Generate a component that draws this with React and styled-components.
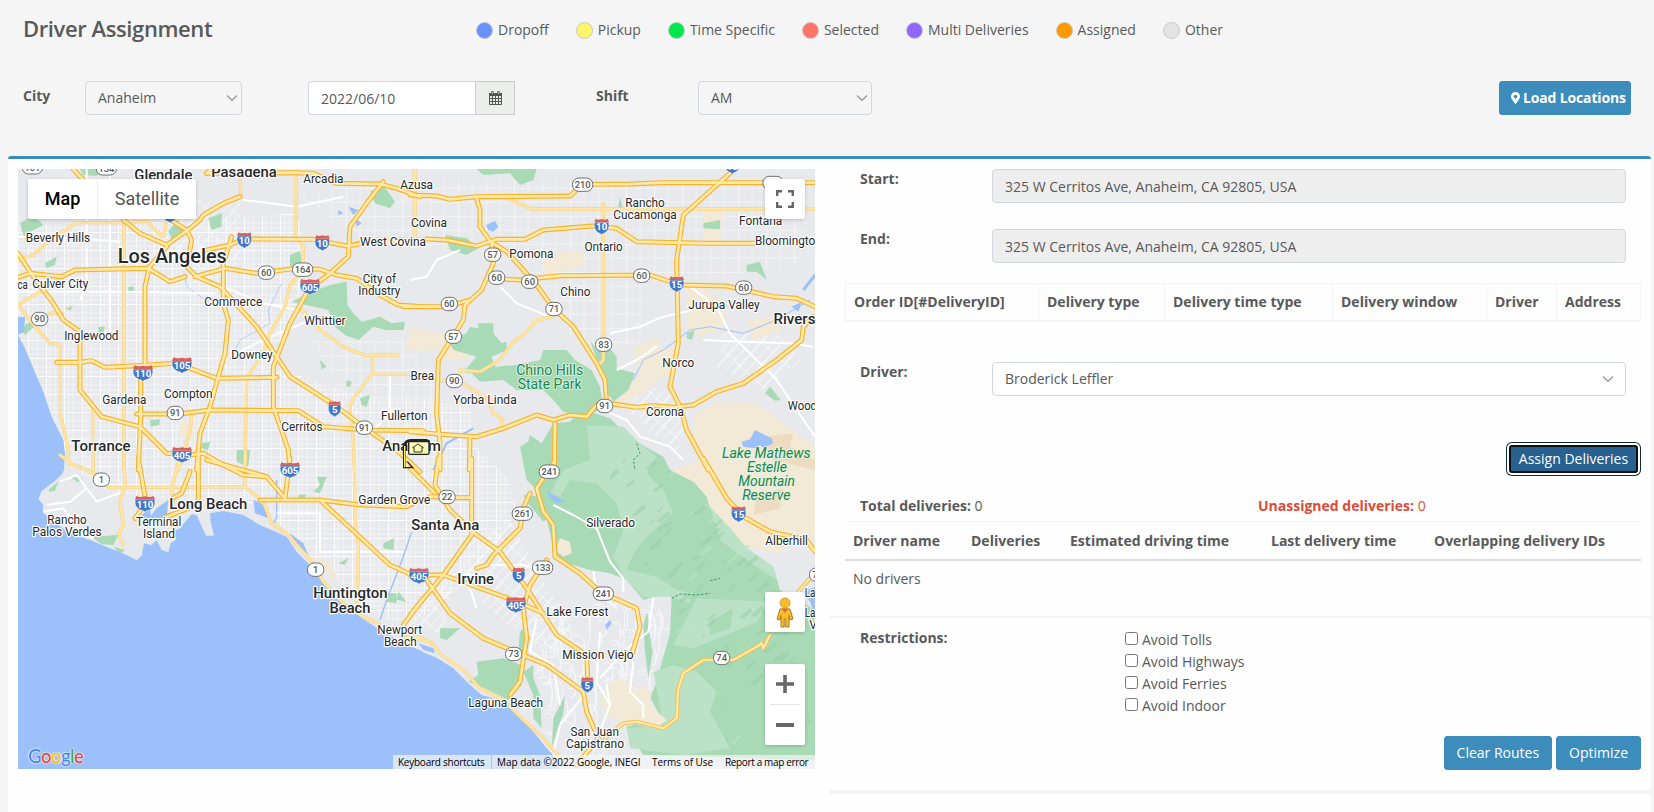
import React from "react";
import styled, { createGlobalStyle, css } from "styled-components";
import { FaMapMarkerAlt } from "react-icons/fa";

const GlobalStyle = createGlobalStyle`
  *, *::before, *::after { box-sizing: border-box; }
  body {
    margin: 0;
    background: #f5f5f5;
    color: #58595b;
    font: 14px/20px "Open Sans", "Noto Sans", sans-serif;
    overflow: hidden;
  }
`;

/* ---------- page parts ---------- */

const Page = styled.div`
  height: 812px;
  display: flex;
  flex-direction: column;
`;

const TopBar = styled.header`
  height: 81px;
  display: flex;
  align-items: flex-start;
  padding: 12px 23px 0;
`;

const Title = styled.h1`
  margin: 0;
  width: 452px;
  font-size: 22px;
  line-height: 32px;
  font-weight: 600;
  letter-spacing: -0.4px;
`;

const Legend = styled.ul`
  display: flex;
  gap: 27px;
  margin: 0;
  padding: 8px 0 0 1px;
  list-style: none;
`;

const LegendItem = styled.li`
  display: flex;
  align-items: center;
  gap: 5px;
`;

const Dot = styled.span`
  width: 17px;
  height: 17px;
  border: 1px solid #c8c8c8;
  border-radius: 50%;
  background: ${(p) => p.$color};
`;

const Filters = styled.div`
  height: 75px;
  display: flex;
  align-items: flex-start;
  padding: 0 23px;
`;

const FilterLabel = styled.label`
  width: ${(p) => p.$width}px;
  padding-top: 5px;
  font-weight: 700;
`;

const fieldFrame = css`
  height: 34px;
  border: 1px solid #d2d6de;
  border-radius: 4px;
  display: flex;
  align-items: center;
`;

const Select = styled.div`
  ${fieldFrame}
  justify-content: space-between;
  width: ${(p) => p.$width};
  margin-right: ${(p) => p.$after || 0}px;
  padding: 0 ${(p) => p.$arrowInset || 3}px 0 12px;
  background: ${(p) => p.$bg || "transparent"};
`;

const DateGroup = styled.div`
  display: flex;
  width: 207px;
  margin-right: 81px;
`;

const DateField = styled.div`
  ${fieldFrame}
  flex: 1;
  padding: 1px 0 0 12px;
  border-right: 0;
  border-radius: 4px 0 0 4px;
  background: #fff;
`;

const DateAddon = styled.div`
  width: 40px;
  height: 34px;
  display: flex;
  align-items: center;
  justify-content: center;
  border: 1px solid #ccc;
  background: #eceeec;
`;

const Button = styled.button`
  height: 34px;
  padding: 0 12px;
  border: 1px solid #3c8dbc;
  border-radius: 3px;
  background: #3c8dbc;
  color: #fff;
  font: inherit;
  white-space: nowrap;
  ${(p) =>
    p.$load &&
    css`
      display: flex;
      align-items: center;
      gap: 3px;
      width: 132px;
      margin-left: auto;
      padding: 0 0 0 11px;
      font-weight: 700;
      letter-spacing: -0.15px;

      svg {
        flex: none;
        width: 9px;
      }
    `}
  ${(p) =>
    p.$focused &&
    css`
      width: 129px;
      height: 28px;
      margin: 3px;
      padding: 0;
      border: 2px solid #101010;
      border-radius: 3px;
      background: #286090;
      box-shadow: 0 0 0 2px #fff, 0 0 0 3px #122b40;
    `}
`;

const Panel = styled.main`
  flex: 1;
  display: flex;
  margin: 0 3px 0 8px;
  border-top: 3px solid #3c8dbc;
  border-radius: 3px 3px 0 0;
  background: #fefefe;
`;

const MapColumn = styled.section`
  width: 822px;
  padding: 10px 0 0 10px;
`;

const Side = styled.section`
  flex: 1;
  padding-top: 10px;
`;

const FieldRow = styled.div`
  display: flex;
  align-items: flex-start;
  height: ${(p) => p.$height}px;
  padding: 0 25px 0 30px;
`;

const RowLabel = styled.label`
  width: 132px;
  font-weight: 700;
`;

const Input = styled.div`
  ${fieldFrame}
  flex: 1;
  padding: 2px 12px 0;
  background: #eee;
`;

const OrderTable = styled.div`
  display: grid;
  grid-template-columns: 193px 126px 168px 154px 70px 85px;
  width: 796px;
  height: 39px;
  margin: 0 0 40px 15px;
  border: 1px solid #f4f4f4;
  border-left: 0;
  border-bottom-width: 2px;
`;

const OrderHead = styled.div`
  padding: 8px;
  border-left: 1px solid #f4f4f4;
  font-weight: 700;
  white-space: nowrap;
`;

const Actions = styled.div`
  display: flex;
  justify-content: flex-end;
  gap: 4px;
  padding-right: 10px;
`;

const Totals = styled.div`
  display: grid;
  grid-template-columns: 398px 1fr;
  height: 45px;
  padding: 20px 0 0 30px;
`;

const Total = styled.div`
  color: ${(p) => (p.$alert ? "#dd4b39" : "inherit")};
`;

const DriverTable = styled.div`
  width: 796px;
  height: 95px;
  margin-left: 15px;
  border-top: 1px solid #f4f4f4;
`;

const DriverHeads = styled.div`
  display: grid;
  grid-template-columns: 118px 99px 201px 163px 1fr;
  height: 39px;
  padding: 9px 8px 0;
  border-bottom: 2px solid #ddd;
  font-weight: 700;
`;

const Empty = styled.div`
  padding: 8px;
`;

const Restrictions = styled.div`
  display: flex;
  height: 120px;
  padding: 10px 0 0 30px;
  border-top: 2px solid #f4f4f4;
`;

const RestrictionLabel = styled.div`
  width: 265px;
  font-weight: 700;
`;

const Choices = styled.div`
  display: flex;
  flex-direction: column;
  padding-top: 1px;
`;

const Choice = styled.label`
  display: flex;
  align-items: flex-start;
  height: 22px;
  line-height: 22px;

  input {
    width: 13px;
    height: 13px;
    margin: 3px 4px 0 0;
  }
`;

const Rule = styled.div`
  height: 4px;
  margin-top: 20px;
  background: #f4f4f4;
`;

/* ---------- map parts ---------- */

const MapFrame = styled.div`
  position: relative;
  width: 797px;
  height: 600px;
  overflow: hidden;
  font-family: Roboto, sans-serif;
`;

const MapCanvas = styled.svg`
  display: block;
  width: 797px;
  height: 600px;
`;

const MapControl = styled.div`
  position: absolute;
  top: ${(p) => p.$top}px;
  ${(p) => (p.$left ? `left: ${p.$left}px;` : "right: 10px;")}
  display: flex;
  flex-direction: ${(p) => (p.$stack ? "column" : "row")};
  align-items: center;
  justify-content: center;
  width: ${(p) => p.$width || 40}px;
  height: ${(p) => p.$height || 40}px;
  border-radius: 2px;
  background: #fff;
  box-shadow: 0 1px 4px -1px rgba(0, 0, 0, 0.3);
`;

const MapType = styled.div`
  flex: ${(p) => (p.$active ? "0 0 69px" : "1")};
  color: ${(p) => (p.$active ? "#000" : "#565656")};
  font-size: 18px;
  line-height: 40px;
  font-weight: ${(p) => (p.$active ? 500 : 400)};
  text-align: center;
  border-left: ${(p) => (p.$active ? "0" : "1px solid #eee")};
`;

const ZoomLine = styled.div`
  width: 30px;
  height: 1px;
  margin: 11px 0;
  background: #e6e6e6;
`;

const Footer = styled.div`
  position: absolute;
  right: 0;
  bottom: 0;
  display: flex;
  height: 14px;
  background: rgba(245, 245, 245, 0.7);
  color: #000;
  font: 10px/15px "Open Sans", sans-serif;
  white-space: nowrap;
`;

const FooterText = styled.span`
  width: ${(p) => p.$width}px;
  padding-left: 5px;
  letter-spacing: ${(p) => p.$tracking || -0.03}px;
  border-right: ${(p) => (p.$divider ? "1px solid #a9c4ea" : "0")};
`;

const Logo = styled.div`
  position: absolute;
  left: 10px;
  bottom: 1px;
  font: 500 18.5px/24px Lato, sans-serif;
  letter-spacing: -0.5px;
  text-shadow: 0 0 1px #fff, 0 0 1px #fff, 0 0 2px #fff;
`;

const Letter = styled.span`
  color: ${(p) => p.$color};
`;

/* ---------- map data: three map units to one screen pixel ---------- */

const ORIGIN = { nw: [0, 0], ne: [1200, 0], sw: [0, 915], se: [1200, 915] };

const shift = (area, text) => {
  const [dx, dy] = ORIGIN[area];
  return text
    .split(" ")
    .map((pair) => {
      const [x, y] = pair.split(",").map(Number);
      return `${x + dx},${y + dy}`;
    })
    .join(" ");
};

const OCEAN = [
  shift("nw", "24,525 45,565 70,625 100,695 125,770 160,840 165,880 162,930"),
  shift("sw", "156,28 130,52 95,78 85,102 100,120 98,142 130,170 180,205 240,225 300,250 350,270 380,286 395,272 402,235 425,240 440,225 455,255 475,262 482,235 500,222 480,205 510,190 530,165 545,148 560,150 588,212 612,212 602,170 600,145 640,138 700,150 750,180 800,202 830,215 860,260 900,300 940,350 1000,415 1050,455 1110,495 1180,535 1230,556"),
  shift("se", "40,562 80,578 130,610 175,655 215,690 290,712 320,745 370,800 410,850 440,880 450,930"),
  "24,1830",
].join(" ");

const AREAS = [
  ["sand", "nw", "508,785 555,785 550,845 508,825"],
  ["sand", "nw", "1185,540 1240,525 1240,575 1190,568"],
  ["sand", "ne", "0,500 130,530 185,600 100,600 80,570 0,560"],
  ["sand", "ne", "670,560 750,530 750,570 800,560 790,640 740,660 700,700 620,740 650,690 690,640"],
  ["sand", "ne", "830,380 880,380 950,440 940,500 870,530 830,500"],
  ["sand", "ne", "400,275 520,275 520,320 400,345"],
  ["sand", "ne", "880,150 940,150 930,245 880,245"],
  ["sand", "ne", "1010,480 1090,470 1120,510 1030,540"],
  ["sand", "ne", "850,765 920,725 1040,730 1200,850 1215,860 1215,1130 1180,1130 1100,1180 1010,1160 930,1110 890,1040 780,930 880,900 850,850"],
  ["sand2", "ne", "1060,830 1150,820 1140,860 1215,900 1215,930 1090,900"],
  ["sand2", "se", "1040,90 1120,70 1110,130 1030,150"],
  ["green", "nw", "30,190 70,165 100,195 60,215 45,240"],
  ["green", "nw", "475,215 500,180 525,210 490,245"],
  ["green", "nw", "210,27 290,27 260,48 220,45"],
  ["green", "nw", "1080,95 1120,75 1155,125 1140,145 1095,130"],
  ["green", "nw", "105,310 140,290 135,315 110,325"],
  ["green", "nw", "595,175 635,160 635,200 605,210"],
  ["green", "nw", "840,285 870,272 878,325 840,318"],
  ["green", "nw", "845,425 895,400 960,375 1010,365 1012,435 1030,460 1055,485 1110,470 1145,490 1185,485 1180,510 1130,510 1090,500 1045,540 1005,525 975,500 955,450"],
  ["green", "nw", "1010,660 1025,665 1020,680 1008,680"],
  ["green", "nw", "1050,715 1080,705 1070,740 1055,735"],
  ["green", "nw", "930,600 950,620 935,628"],
  ["green", "nw", "355,380 372,380 372,395 355,395"],
  ["green", "nw", "165,445 190,438 180,452"],
  ["green", "nw", "265,500 285,500 280,520 265,515"],
  ["green", "nw", "420,780 450,778 448,795 422,800"],
  ["green", "nw", "30,505 60,485 72,500 45,525"],
  ["green", "nw", "575,850 600,845 595,870 575,865"],
  ["green", "nw", "680,870 720,870 715,920 680,905"],
  ["green", "ne", "200,27 380,27 370,60 330,75 300,40 220,45"],
  ["green", "ne", "105,225 170,235 205,265 170,285 120,270"],
  ["green", "ne", "880,190 930,180 930,208 880,205"],
  ["green", "ne", "1010,315 1050,305 1070,360 1040,335 1010,335"],
  ["green", "ne", "630,110 640,150 625,140"],
  ["green", "ne", "830,520 855,510 845,540 830,535"],
  ["green", "ne", "1065,700 1080,680 1112,720 1095,722"],
  ["green", "ne", "115,540 170,520 180,500 205,505 205,490 250,490 250,520 275,550 290,545 290,570 245,590 255,620 320,615 390,600 400,570 470,570 495,600 545,630 570,680 580,740 530,770 460,755 430,720 400,690 320,690 280,660 210,665 185,640 160,635 200,590 130,570"],
  ["green", "ne", "540,540 560,570 600,565 620,590 620,625 675,640 655,690 610,725 585,690 570,630"],
  ["green", "ne", "330,860 355,845 360,825 395,850 430,790 480,785 520,740 555,760 600,775 640,815 670,840 760,890 780,930 850,965 890,1010 900,1045 960,1105 1010,1165 1090,1220 1110,1290 1215,1350 1215,1800 700,1785 650,1710 650,1700 750,1670 740,1650 720,1610 735,1580 780,1420 785,1310 760,1300 700,1320 650,1260 600,1240 540,1230 440,1200 410,1080 390,1000 350,960"],
  ["pale", "ne", "530,795 640,800 690,850 740,890 710,940 760,990 790,1060 720,1120 670,1180 650,1230 740,1250 800,1290 850,1300 840,1330 780,1310 700,1310 640,1250 610,1190 640,1110 620,1030 560,970 480,960 450,1010 420,1000 460,930 540,900"],
  ["pale", "ne", "900,1040 960,1105 1010,1165 1090,1220 1100,1260 1010,1200 930,1140"],
  ["pale", "se", "730,620 790,600 860,620 920,680 900,740 960,850 820,870 660,850 650,790 760,780"],
  ["pale", "se", "860,400 1080,410 1040,470 950,510 850,550 790,540"],
  ["green", "se", "900,470 970,430 960,490 900,510"],
  ["sand", "se", "450,220 480,230 485,265 460,275 435,255"],
  ["sand", "se", "600,650 630,640 680,680 700,660 725,680 720,720 770,765 740,790 640,770 600,760 570,710"],
  ["green", "se", "200,590 280,580 335,600 335,660 295,705 225,670 175,650 205,630"],
  ["green", "se", "330,500 350,480 360,520 340,595 325,560"],
  ["green", "se", "90,490 150,490 110,525 90,520"],
  ["green", "se", "340,620 370,600 370,640 390,690 395,790 370,760 370,690"],
  ["green", "se", "430,760 465,690 460,745 440,800 425,850"],
  ["green", "se", "700,480 712,440 718,500 728,560 715,640 705,560"],
  ["green", "se", "340,90 400,95 430,150 400,170 350,110"],
  ["green", "sw", "120,70 145,50 135,78 115,80"],
  ["green", "sw", "180,35 215,40 205,52"],
  ["green", "sw", "245,215 325,210 310,240 275,238"],
  ["green", "sw", "310,245 345,255 330,268"],
  ["green", "sw", "920,35 950,35 930,85 910,80 930,60"],
  ["green", "sw", "1120,235 1152,220 1150,255 1120,250"],
  ["green", "sw", "985,295 1015,280 1005,300"],
  ["green", "sw", "1135,385 1160,385 1160,415 1130,410"],
  ["green", "sw", "1165,380 1190,410 1160,405"],
  ["green", "sw", "865,90 890,88 882,102 865,100"],
  ["sand", "sw", "900,275 950,285 975,320 975,345 945,320"],
  ["lake", "ne", "995,845 1020,838 1035,810 1085,835 1090,850 1060,865 1050,855 1035,865 1000,860"],
  ["lake", "ne", "228,195 255,183 265,200 250,215 235,210"],
  ["lake", "ne", "1145,440 1175,425 1165,455"],
  ["lake", "nw", "24,470 45,472 42,515 24,525"],
  ["lake", "nw", "1015,140 1045,150 1030,165"],
  ["lake", "nw", "985,150 1000,160 985,165"],
  ["lake", "nw", "1035,175 1055,190 1040,200"],
  ["lake", "se", "410,75 430,90 465,110 440,115 420,100"],
  ["lake", "se", "585,480 600,465 605,475 590,495"],
  ["lake", "se", "1180,380 1215,365 1215,450 1200,410"],
  ["lake", "sw", "440,130 475,105 470,160 430,180 420,155"],
  ["lake", "sw", "730,105 765,120 775,160 735,145"],
  ["lake", "sw", "840,205 880,235 895,270 855,240"],
  ["lake", "sw", "395,150 420,130 425,170 405,170"],
  ["lake", "se", "25,535 70,550 75,565 40,555"],
];

const AREA_COLORS = {
  green: "#a8dab5",
  pale: "#bbe2c6",
  sand: "#f2e9d6",
  sand2: "#eedcc2",
  lake: "#9cc0f9",
};

const ROADS = [
  /* county roads */
  ["minor", "nw", "342,180 342,930"],
  ["minor", "nw", "24,300 70,285 120,240 200,188 345,188 405,185"],
  ["minor", "nw", "24,435 90,395 150,350"],
  ["minor", "nw", "30,440 75,500 120,550 151,555 151,760 175,870 175,910 220,925 260,945"],
  ["minor", "nw", "95,470 130,458 158,460"],
  ["minor", "nw", "248,740 248,930"],
  ["minor", "nw", "470,180 460,230 430,205 410,180"],
  ["minor", "nw", "858,27 858,230 880,260 880,310"],
  ["minor", "nw", "870,345 840,375 825,440 780,520 760,580 710,655 705,930"],
  ["minor", "nw", "545,765 540,810 505,930"],
  ["minor", "nw", "870,445 930,510 1000,560 1060,585 1165,585"],
  ["minor", "nw", "1088,585 1088,640 1030,715 1020,740 1030,840 1033,930"],
  ["minor", "nw", "1088,643 1230,643"],
  ["minor", "nw", "1018,258 1060,240 1140,237 1240,237"],
  ["minor", "nw", "1213,27 1213,240"],
  ["minor", "nw", "690,27 692,110"],
  ["minor", "ne", "15,27 15,235"],
  ["minor", "ne", "290,115 365,147 1214,147"],
  ["minor", "ne", "580,130 580,600 570,610"],
  ["minor", "ne", "430,470 380,480 345,520 310,545 270,600 210,635 150,630 145,655"],
  ["minor", "ne", "75,660 150,665 230,715 250,760 275,775 275,805"],
  ["minor", "sw", "150,-30 190,0"],
  ["minor", "sw", "248,-30 250,25"],
  ["minor", "sw", "342,-30 345,60 330,110 340,180 325,205 340,240"],
  ["minor", "sw", "280,55 300,68 705,65 760,110 785,175 830,205 900,285 940,350 1000,415 1060,455 1130,490 1180,505 1240,520"],
  ["minor", "sw", "510,-30 485,70 490,110"],
  ["minor", "sw", "705,-30 705,65"],
  ["minor", "sw", "1033,-30 1035,180 1045,240 1042,440"],
  ["minor", "se", "-20,515 60,530 95,570 160,615 210,670 280,705 330,755 390,810 440,865 470,900"],
  /* freeways */
  ["major", "nw", "24,352 60,340 155,350 195,330 415,325 480,365 525,350"],
  ["major", "nw", "24,280 70,350 130,430 160,480 210,515 210,690 275,770 390,800 470,880 540,885 580,880 640,915 700,945 770,950"],
  ["major", "nw", "340,180 390,220 470,255 540,205 570,180 580,165 640,130 690,110"],
  ["major", "nw", "415,325 470,260"],
  ["major", "nw", "418,320 405,380 405,610"],
  ["major", "nw", "392,655 392,770 385,930"],
  ["major", "nw", "140,607 210,607 245,602 285,622 380,617 500,610 620,655 800,652"],
  ["major", "nw", "665,230 640,310 640,430 655,480 645,580 625,650 600,740 570,820 560,930"],
  ["major", "nw", "475,175 530,210 545,240 530,320 560,350 630,380 740,500 840,650 980,740 1080,815 1160,870 1230,935"],
  ["major", "nw", "590,270 660,255 700,237 910,238 1010,258 1060,250"],
  ["major", "nw", "555,350 645,325 740,340 860,325 930,328 980,345 1040,355 1100,400 1165,435 1240,440"],
  ["major", "nw", "380,762 510,762 600,750 865,752 940,800 1070,810 1240,812"],
  ["major", "nw", "1120,65 1070,130 1020,200 1015,290 960,340 895,390 840,490 790,620 790,740 835,870 840,930"],
  ["major", "nw", "190,27 220,60"],
  ["major", "nw", "590,40 850,38 910,40 980,70 1110,72 1160,85 1230,110"],
  ["major", "nw", "600,30 590,40"],
  ["major", "ne", "0,105 80,108 120,118 200,110 480,108 510,80 530,73 660,72 760,68 1214,68"],
  ["major", "ne", "200,115 210,150 210,200 245,250 250,310 215,390 165,435 160,480 85,600 80,760 90,850 90,930"],
  ["major", "ne", "50,237 110,240 200,258 260,238 345,238 400,210 550,198 620,205 680,245 890,250 1035,250"],
  ["major", "ne", "240,355 330,360 450,347 720,345 810,375 950,378 1090,410 1160,415 1215,440"],
  ["major", "ne", "-20,440 110,440 180,420"],
  ["major", "ne", "250,250 290,275 340,330 380,375 430,445 490,500 560,610 585,660 590,735"],
  ["major", "ne", "960,40 820,165 800,300 805,550 780,680 810,740 830,810 895,930"],
  ["major", "ne", "1210,470 1180,500 1175,540 1100,600 1000,670 920,695 850,735 790,742 730,737 680,742 610,732 560,735 530,770 480,765 430,780 380,765 280,805 200,830 120,825 0,815"],
  ["major", "ne", "180,830 178,930"],
  ["major", "ne", "435,790 433,930"],
  ["major", "sw", "385,-20 405,95"],
  ["major", "sw", "590,-15 770,35 825,100 840,-20"],
  ["major", "sw", "750,105 930,105 1050,120"],
  ["major", "sw", "930,105 1140,300 1240,345"],
  ["major", "sw", "490,98 515,85 540,20"],
  ["major", "sw", "375,160 400,125"],
  ["major", "sw", "470,155 535,130"],
  ["major", "sw", "565,-30 565,105"],
  ["major", "sw", "1060,120 1190,125 1220,110"],
  ["major", "sw", "1240,400 1180,480"],
  ["major", "se", "85,-20 75,60 120,135 200,210 270,260 350,370 440,510 530,570 533,635"],
  ["major", "se", "0,10 75,85"],
  ["major", "se", "185,-20 185,210 100,330 0,450"],
  ["major", "se", "0,330 100,330 310,405 400,445"],
  ["major", "se", "50,345 120,445 220,520 410,600 520,680 530,740 565,820 500,900"],
  ["major", "se", "433,-10 380,70 400,140 430,180 435,275 510,325 570,380 680,430 690,485 665,570"],
  ["major", "se", "360,85 340,130 330,190 250,270 230,300 200,310"],
  ["major", "se", "410,285 360,360 340,430 350,520 330,650 300,690"],
  ["major", "se", "60,95 140,98 185,98"],
  ["major", "se", "880,-20 950,100 1000,155 1080,200 1190,225 1215,260"],
  ["minor2", "se", "585,820 640,775 680,770 760,790 800,760 805,670 820,625 880,585 970,585 1040,545 1055,535 1060,550 1080,510"],
  ["minor2", "se", "1165,380 1200,340"],
];

const STREETS = [
  ["nw", "24,230 200,235 330,245"],
  ["nw", "24,395 340,395 620,400"],
  ["nw", "230,27 230,360 212,420"],
  ["nw", "300,27 300,540"],
  ["nw", "700,120 860,140 1000,110"],
  ["nw", "640,380 760,430 860,450"],
  ["nw", "660,590 760,540 900,480"],
  ["nw", "1140,640 1140,760 1090,810"],
  ["ne", "0,360 50,350 80,300 150,270"],
  ["ne", "270,380 320,430 420,470"],
  ["ne", "600,520 690,500 760,470 850,450"],
  ["ne", "840,380 920,440 960,520 1000,560 1100,660 1215,830"],
  ["ne", "880,540 1000,545 1140,550 1210,560"],
  ["ne", "580,750 650,780 690,830 780,860 820,900"],
  ["ne", "620,630 680,600 740,560"],
  ["se", "430,120 490,150 560,190 600,290 640,340 640,380"],
  ["se", "240,300 340,300 410,320"],
  ["se", "380,460 360,560 430,600 450,720"],
  ["se", "570,500 560,650 600,720"],
  ["se", "430,870 450,780 530,680"],
  ["se", "670,590 660,680 700,720 700,760"],
  ["se", "590,660 600,720 570,800"],
  ["se", "730,400 715,500 640,560 570,640"],
  ["se", "100,320 180,370 200,430"],
  ["se", "550,320 560,380 620,430"],
  ["sw", "150,50 200,30 260,110 340,80"],
  ["sw", "110,120 180,110 230,70"],
  ["sw", "100,140 160,130 210,200 250,220"],
  ["sw", "800,145 930,145 930,260 1180,260"],
];

const ROAD_STYLES = {
  major: ["#f9b32b", 15, "#ffe9a8", 8],
  minor: ["#fad07a", 10, "#fee5a5", 7],
  minor2: ["#f9b93e", 12, "#ffe9a8", 7],
};

/* name, area, centre x, baseline y, width, size in units, weight */
const PLACES = [
  ["Glendale", "nw", 460, 61, 174, 42, 500],
  ["Pasadena", "nw", 702, 51, 197, 44, 500],
  ["Arcadia", "nw", 940, 69, 121],
  ["Azusa", "nw", 1220, 87, 98],
  ["Beverly Hills", "nw", 144, 246, 193],
  ["Los Angeles", "nw", 487, 308, 327, 61, 500],
  ["ca", "nw", 38, 386, 31],
  ["Culver City", "nw", 151, 384, 168],
  ["Commerce", "nw", 670, 438, 174],
  ["City of", "nw", 1108, 369, 100],
  ["Industry", "nw", 1108, 405, 126],
  ["Whittier", "nw", 945, 495, 124],
  ["Inglewood", "nw", 244, 540, 163],
  ["Downey", "nw", 726, 598, 124],
  ["Gardena", "nw", 343, 732, 132],
  ["Compton", "nw", 535, 714, 146],
  ["Cerritos", "nw", 876, 813, 124],
  ["Torrance", "nw", 273, 874, 178, 45, 500],
  ["West Covina", "nw", 1149, 258, 198],
  ["Fullerton", "nw", 1183, 780, 140],
  ["Anaheim", "nw", 1205, 873, 176, 45, 500],
  ["Covina", "ne", 57, 201, 108],
  ["Pomona", "ne", 364, 294, 132],
  ["Ontario", "ne", 581, 273, 115],
  ["Rancho", "ne", 705, 141, 118],
  ["Cucamonga", "ne", 705, 177, 190],
  ["Fontana", "ne", 1052, 195, 130],
  ["Bloomington", "ne", 1135, 255, 200],
  ["Chino", "ne", 496, 408, 90],
  ["Jurupa Valley", "ne", 942, 447, 214],
  ["Riverside", "ne", 1184, 493, 187, 45, 500],
  ["Norco", "ne", 805, 621, 96],
  ["Brea", "ne", 37, 660, 71],
  ["Yorba Linda", "ne", 225, 732, 190],
  ["Corona", "ne", 765, 768, 114],
  ["Woodcrest", "ne", 1215, 750, 163],
  ["Rancho", "sw", 171, 177, 118],
  ["Palos Verdes", "sw", 171, 213, 208],
  ["Terminal", "sw", 446, 183, 136],
  ["Island", "sw", 447, 219, 96],
  ["Long Beach", "sw", 595, 133, 234, 45, 500],
  ["Garden Grove", "sw", 1153, 118, 216],
  ["Huntington", "sw", 1021, 400, 223, 45, 500],
  ["Beach", "sw", 1020, 445, 123, 45, 500],
  ["Newport", "sw", 1169, 508, 134],
  ["Beach", "sw", 1171, 543, 98],
  ["Santa Ana", "se", 106, 196, 204, 45, 500],
  ["Irvine", "se", 197, 357, 110, 45, 500],
  ["Silverado", "se", 602, 186, 147],
  ["Alberhill", "se", 1130, 240, 128],
  ["Lake Forest", "se", 502, 453, 186],
  ["Mission Viejo", "se", 564, 582, 214],
  ["Laguna Beach", "se", 287, 726, 225],
  ["San Juan", "se", 554, 812, 145],
  ["Capistrano", "se", 555, 849, 174],
  ["La", "se", 1200, 396, 32],
  ["La", "se", 1200, 457, 32],
  ["V", "se", 1209, 491, 23],
];

const PARKS = [
  ["Chino Hills", "ne", 419, 645, 201],
  ["State Park", "ne", 419, 686, 192],
  ["Lake Mathews", "ne", 1069, 893, 266, true],
  ["Estelle", "ne", 1071, 935, 120, true],
  ["Mountain", "se", 1070, 62, 170, true],
  ["Reserve", "se", 1069, 104, 145, true],
];

const INTERSTATES = [
  ["10", "nw", 703, 241], ["10", "nw", 937, 249], ["605", "nw", 900, 381],
  ["110", "nw", 399, 640], ["105", "nw", 516, 616], ["5", "nw", 974, 747],
  ["405", "nw", 516, 885], ["10", "nw", 480, 165], ["605", "nw", 840, 931],
  ["10", "ne", 575, 200], ["15", "ne", 800, 373], ["15", "ne", 967, 18],
  ["110", "sw", 405, 117], ["405", "sw", 1227, 333],
  ["5", "se", 326, 331], ["405", "se", 318, 420], ["5", "se", 532, 660],
  ["15", "se", 986, 148],
];

const ROUTES = [
  ["134", "nw", 289, 25], ["101", "nw", 67, 22], ["60", "nw", 769, 338],
  ["164", "nw", 878, 329], ["90", "nw", 89, 477], ["91", "nw", 496, 759],
  ["91", "nw", 1063, 803], ["210", "ne", 518, 74], ["57", "ne", 248, 284],
  ["60", "ne", 260, 353], ["60", "ne", 359, 365], ["60", "ne", 118, 432],
  ["71", "ne", 432, 447], ["60", "ne", 695, 347], ["60", "ne", 1001, 383],
  ["57", "ne", 130, 530], ["83", "ne", 581, 554], ["90", "ne", 133, 663],
  ["91", "ne", 584, 738], ["210", "ne", 1089, 69], ["241", "se", 418, 20],
  ["1", "sw", 274, 44], ["1", "sw", 917, 314], ["22", "se", 111, 96],
  ["261", "se", 337, 146], ["133", "se", 398, 308], ["241", "se", 580, 386],
  ["73", "se", 311, 567], ["74", "se", 935, 579], ["74", "se", 1223, 329],
];

const at = (area, x, y) => [x + ORIGIN[area][0], y + ORIGIN[area][1]];

/* small deterministic generator used for relief and back streets */
const series = (count, seed) => {
  let s = seed;
  return Array.from({ length: count }, () => {
    s = (s * 16807) % 2147483647;
    return s / 2147483647;
  });
};

const relief = series(480, 91);
const lanes = series(600, 17);

const Interstate = ({ label, x, y }) => {
  const w = label.length > 2 ? 31 : label.length === 2 ? 23 : 20;
  return (
    <g transform={`translate(${x} ${y})`}>
      <path
        d={`M${-w + 2} -13 H${w - 2} Q${w + 3} 8 ${w * 0.45} 18 Q4 20 0 24 Q-4 20 ${-w * 0.45} 18 Q${-w - 3} 8 ${-w + 2} -13Z`}
        fill="#3f78c9"
        stroke="#fff"
        strokeWidth="1.5"
      />
      <path
        d={`M${-w + 5} -24 Q${-w / 2} -19 0 -23 Q${w / 2} -19 ${w - 5} -24 L${w - 1} -13 H${-w + 1}Z`}
        fill="#d9605c"
      />
      <text y="11" fontSize="29" fontWeight="700" fill="#fff" textAnchor="middle">
        {label}
      </text>
    </g>
  );
};

const Route = ({ label, x, y }) => {
  const w = label.length > 2 ? 61 : 49;
  return (
    <g transform={`translate(${x} ${y})`}>
      <rect x={-w / 2} y="-20" width={w} height="40" rx="19" fill="#fff" stroke="#6b6f73" strokeWidth="3" />
      <text y="10" fontSize="28" fontWeight="500" fill="#55585c" textAnchor="middle">
        {label}
      </text>
    </g>
  );
};

const HILLS = shift("ne", "600,860 760,910 880,1020 1090,1230 1100,1350 1200,1400 1200,1780 950,1770 940,1560 800,1430 790,1290 700,1210 660,1100 600,990");

const MapDrawing = () => (
  <MapCanvas viewBox="24 27 2391 1800">
    <defs>
      <pattern id="blocks" width="54" height="54" patternUnits="userSpaceOnUse">
        <path d="M27 0V54M0 27H54M13 0V54M0 42H54" stroke="#f6f7f8" strokeWidth="2.2" />
        <path d="M0 0V54M0 0H54" stroke="#fff" strokeWidth="5" />
      </pattern>
      <pattern id="wide-blocks" width="84" height="84" patternUnits="userSpaceOnUse">
        <path d="M42 0V84M0 42H84" stroke="#f3f4f5" strokeWidth="2.5" />
        <path d="M0 0V84M0 0H84" stroke="#fbfbfc" strokeWidth="3.5" />
      </pattern>
      <pattern id="slant-blocks" width="48" height="48" patternUnits="userSpaceOnUse" patternTransform="rotate(42)">
        <path d="M0 0V48M0 0H48M24 0V48" stroke="#fff" strokeWidth="3" />
      </pattern>
      <clipPath id="hills">
        <polygon points={HILLS} />
      </clipPath>
    </defs>
    <rect x="24" y="27" width="2391" height="1800" fill="#e7e9ed" />
    <polygon points="24,190 200,200 860,160 900,330 790,620 1020,700 1240,720 1380,740 1400,860 1500,960 1520,1060 1400,1240 1200,1400 1100,1370 900,1190 760,1040 300,1000 120,880 24,520" fill="url(#blocks)" />
    <polygon points="860,100 1180,60 1700,60 2300,60 2415,260 2340,320 1900,380 1890,560 1700,560 1620,440 1500,280 1200,270 1020,220" fill="url(#wide-blocks)" />
    <polygon points="900,540 1180,540 1280,650 1280,740 1020,740" fill="url(#wide-blocks)" />
    <polygon points="1380,1150 1500,1080 1600,1260 1700,1420 1680,1500 1480,1390 1360,1260" fill="url(#slant-blocks)" />
    <polygon points="1860,700 1960,680 2040,760 2000,880 1860,760" fill="url(#slant-blocks)" />
    <polygon points="2140,520 2300,520 2380,600 2260,690 2120,620" fill="url(#slant-blocks)" />
    <polygon points="1220,1300 1330,1270 1300,1420 1210,1400" fill="url(#slant-blocks)" />
    <polygon points="480,120 690,120 690,300 540,340 430,250" fill="url(#slant-blocks)" opacity=".7" />
    {Array.from({ length: 90 }, (_, i) => {
      const x = 1560 + lanes[i * 3] * 400;
      const y = 1330 + lanes[i * 3 + 1] * 400;
      const k = 18 + lanes[i * 3 + 2] * 35;
      return (
        <path
          key={i}
          d={`M${x} ${y}q${k} ${-k / 2} ${k} ${k}t${-k / 2} ${k}`}
          fill="none"
          stroke="#f8f9fa"
          strokeWidth="3"
        />
      );
    })}
    {AREAS.map(([kind, area, points], i) => (
      <polygon key={i} points={shift(area, points)} fill={AREA_COLORS[kind]} />
    ))}
    <g clipPath="url(#hills)">
      {Array.from({ length: 160 }, (_, i) => {
        const x = 1780 + relief[i * 3] * 620;
        const y = 860 + relief[i * 3 + 1] * 900;
        const k = 10 + relief[i * 3 + 2] * 26;
        return (
          <path
            key={i}
            d={`M${x} ${y}l${k} ${-k * 0.9}l${k * 0.2} ${k * 0.3}l${-k * 0.8} ${k * 0.7}z`}
            fill={i % 3 ? "#98cda8" : "#bfe4ca"}
            opacity=".5"
          />
        );
      })}
    </g>
    <polygon points={OCEAN} fill="#9cc0f9" />
    <g fill="none" stroke="#9cc0f9" strokeWidth="4">
      <polyline points="525,350 530,380 600,430" strokeWidth="2" />
      <polyline points="815,370 775,450 780,490 690,540 660,600" strokeWidth="2" />
      <polyline points="1205,1115 1180,1190 1130,1320 1110,1380" />
      <polyline points="1270,930 1310,850 1390,805" strokeWidth="6" />
      <polyline points="2380,390 2415,345" strokeWidth="9" />
      <polyline points="1870,660 1900,600 1960,570 2040,510 2100,500 2200,520 2300,480 2400,420" strokeWidth="3" />
      <polyline points="800,960 800,1070 790,1095" />
    </g>
    {STREETS.map(([area, points], i) => (
      <polyline key={i} points={shift(area, points)} fill="none" stroke="#fff" strokeWidth="6" strokeLinejoin="round" />
    ))}
    {["minor", "minor2", "major"].map((kind) => {
      const [edge, edgeWidth, core, coreWidth] = ROAD_STYLES[kind];
      const lines = ROADS.filter((r) => r[0] === kind).map((r) => shift(r[1], r[2]));
      return (
        <g key={kind} fill="none" strokeLinejoin="round" strokeLinecap="round">
          {lines.map((points, i) => (
            <polyline key={i} points={points} stroke={edge} strokeWidth={edgeWidth} />
          ))}
          {lines.map((points, i) => (
            <polyline key={i} points={points} stroke={core} strokeWidth={coreWidth} />
          ))}
        </g>
      );
    })}
    <g fill="none" stroke="#3f9c5f" strokeWidth="3" strokeDasharray="8 5">
      <polyline points="1985,1315 2010,1302 2060,1305 2100,1300" />
      <polyline points="1880,850 1890,880 1870,900 1875,930" />
      <polyline points="2100,1262 2130,1255" />
    </g>
    {ROUTES.map(([label, area, cx, cy], i) => {
      const [x, y] = at(area, cx, cy);
      return <Route key={i} label={label} x={x} y={y} />;
    })}
    {INTERSTATES.map(([label, area, cx, cy], i) => {
      const [x, y] = at(area, cx, cy);
      return <Interstate key={i} label={label} x={x} y={y} />;
    })}
    <g textAnchor="middle" paintOrder="stroke" stroke="#fff" strokeWidth="7" strokeLinejoin="round" fill="#25282c">
      {PLACES.map(([name, area, cx, cy, width, size, weight], i) => {
        const [x, y] = at(area, cx, cy);
        return (
          <text key={i} x={x} y={y} textLength={width} lengthAdjust="spacingAndGlyphs" fontSize={size || 36.5} fontWeight={weight || 400}>
            {name}
          </text>
        );
      })}
      {PARKS.map(([name, area, cx, cy, width, italic]) => {
        const [x, y] = at(area, cx, cy);
        return (
          <text
            key={name}
            x={x}
            y={y}
            textLength={width}
            lengthAdjust="spacingAndGlyphs"
            fontSize="42"
            fontStyle={italic ? "italic" : "normal"}
            fill="#188649"
            stroke="#e3f3e7"
            strokeWidth="5"
          >
            {name}
          </text>
        );
      })}
    </g>
    <g>
      <path d="M1183 925V858Q1186 841 1202 841H1248Q1256 842 1257 848" fill="none" stroke="#222" strokeWidth="8" />
      <path d="M1184 922V858" stroke="#ffef5a" strokeWidth="4" />
      <path d="M1184 923H1208L1192 905" fill="none" stroke="#222" strokeWidth="4" />
      <rect x="1196" y="845" width="61" height="38" rx="4" fill="#fffdb4" stroke="#222" strokeWidth="4" />
      <path d="M1208 863L1224 852L1240 863H1236V876H1212V863Z" fill="none" stroke="#333" strokeWidth="3" />
    </g>
  </MapCanvas>
);

const GOOGLE = [
  ["G", "#4285f4"], ["o", "#ea4335"], ["o", "#fbbc05"],
  ["g", "#4285f4"], ["l", "#34a853"], ["e", "#ea4335"],
];

const CityMap = () => (
  <MapFrame>
    <MapDrawing />
    <MapControl $top={10} $left={10} $width={168}>
      <MapType $active>Map</MapType>
      <MapType>Satellite</MapType>
    </MapControl>
    <MapControl $top={10}>
      <svg width="18" height="18" viewBox="0 0 18 18" fill="none" stroke="#666" strokeWidth="2.4">
        <path d="M1.2 6V1.2H6M12 1.2H16.8V6M16.8 12V16.8H12M6 16.8H1.2V12" />
      </svg>
    </MapControl>
    <MapControl $top={423}>
      <svg width="18" height="31" viewBox="0 0 18 31">
        <path d="M4 12H14L17 22L14 23L13 18.5V30H9.8V22H8.2V30H5V18.5L4 23L1 22Z" fill="#fbbc2c" stroke="#a67c24" strokeWidth="1" />
        <path d="M5.5 11.5H12.5L9 16Z" fill="#e06b2c" />
        <circle cx="9" cy="6" r="5" fill="#fbbc2c" stroke="#c98d22" strokeWidth=".8" />
      </svg>
    </MapControl>
    <MapControl $top={495} $height={81} $stack>
      <svg width="18" height="18" viewBox="0 0 18 18" fill="#666">
        <path d="M7.2 0H10.8V7.2H18V10.8H10.8V18H7.2V10.8H0V7.2H7.2Z" />
      </svg>
      <ZoomLine />
      <svg width="18" height="18" viewBox="0 0 18 18" fill="#666">
        <path d="M0 7H18V11H0Z" />
      </svg>
    </MapControl>
    <Logo>
      {GOOGLE.map(([letter, color], i) => (
        <Letter key={i} $color={color}>{letter}</Letter>
      ))}
    </Logo>
    <Footer>
      <FooterText $width={99} $divider $tracking={-0.25}>Keyboard shortcuts</FooterText>
      <FooterText $width={155}>Map data ©2022 Google, INEGI</FooterText>
      <FooterText $width={73}>Terms of Use</FooterText>
      <FooterText $width={95} $tracking={-0.36}>Report a map error</FooterText>
    </Footer>
  </MapFrame>
);

/* ---------- small drawings ---------- */

const Chevron = () => (
  <svg width="12" height="8" viewBox="0 0 12 8" fill="none" stroke="#999" strokeWidth="1.3">
    <path d="M1 1.5L6 6.3L11 1.5" />
  </svg>
);

const CalendarIcon = () => (
  <svg width="13" height="14" viewBox="0 0 13 14" fill="none" stroke="#555" strokeWidth="1">
    <path d="M.5 4V13.5H12.5V4M.5 7.5H12.5M.5 10.5H12.5M3.5 4.5V13.5M6.5 4.5V13.5M9.5 4.5V13.5" />
    <path d="M0 2H13V5H0Z" fill="#555" stroke="none" />
    <path d="M3.5 0V3M9.5 0V3" strokeWidth="2.2" />
    <path d="M3.5 .8V3M9.5 .8V3" stroke="#ddd" strokeWidth=".7" />
  </svg>
);

/* ---------- content ---------- */

const LEGEND = [
  ["Dropoff", "#6991fd"],
  ["Pickup", "#fdf569"],
  ["Time Specific", "#00e64d"],
  ["Selected", "#fd7567"],
  ["Multi Deliveries", "#8e67fd"],
  ["Assigned", "#ff9900"],
  ["Other", "#e3e3e3"],
];

const ORDER_HEADS = ["Order ID[#DeliveryID]", "Delivery type", "Delivery time type", "Delivery window", "Driver", "Address"];
const DRIVER_HEADS = ["Driver name", "Deliveries", "Estimated driving time", "Last delivery time", "Overlapping delivery IDs"];
const CHOICES = ["Avoid Tolls", "Avoid Highways", "Avoid Ferries", "Avoid Indoor"];
const DEPOT = "325 W Cerritos Ave, Anaheim, CA 92805, USA";

export default function App() {
  return (
    <Page>
      <GlobalStyle />
      <TopBar>
        <Title>Driver Assignment</Title>
        <Legend>
          {LEGEND.map(([name, color]) => (
            <LegendItem key={name}>
              <Dot $color={color} />
              {name}
            </LegendItem>
          ))}
        </Legend>
      </TopBar>
      <Filters>
        <FilterLabel $width={62}>City</FilterLabel>
        <Select $width="157px" $after={66}>Anaheim<Chevron /></Select>
        <DateGroup>
          <DateField>2022/06/10</DateField>
          <DateAddon><CalendarIcon /></DateAddon>
        </DateGroup>
        <FilterLabel $width={102}>Shift</FilterLabel>
        <Select $width="174px">AM<Chevron /></Select>
        <Button $load><FaMapMarkerAlt size={12} />Load Locations</Button>
      </Filters>
      <Panel>
        <MapColumn><CityMap /></MapColumn>
        <Side>
          <FieldRow $height={60}>
            <RowLabel>Start:</RowLabel>
            <Input>{DEPOT}</Input>
          </FieldRow>
          <FieldRow $height={54}>
            <RowLabel>End:</RowLabel>
            <Input>{DEPOT}</Input>
          </FieldRow>
          <OrderTable>
            {ORDER_HEADS.map((head) => <OrderHead key={head}>{head}</OrderHead>)}
          </OrderTable>
          <FieldRow $height={80}>
            <RowLabel>Driver:</RowLabel>
            <Select $width="634px" $bg="#fff" $arrowInset={11}>Broderick Leffler<Chevron /></Select>
          </FieldRow>
          <Actions>
            <Button $focused>Assign Deliveries</Button>
          </Actions>
          <Totals>
            <Total><b>Total deliveries:</b> 0</Total>
            <Total $alert><b>Unassigned deliveries:</b> 0</Total>
          </Totals>
          <DriverTable>
            <DriverHeads>
              {DRIVER_HEADS.map((head) => <span key={head}>{head}</span>)}
            </DriverHeads>
            <Empty>No drivers</Empty>
          </DriverTable>
          <Restrictions>
            <RestrictionLabel>Restrictions:</RestrictionLabel>
            <Choices>
              {CHOICES.map((name) => (
                <Choice key={name}><input type="checkbox" />{name}</Choice>
              ))}
            </Choices>
          </Restrictions>
          <Actions>
            <Button>Clear Routes</Button>
            <Button>Optimize</Button>
          </Actions>
          <Rule />
        </Side>
      </Panel>
    </Page>
  );
}
